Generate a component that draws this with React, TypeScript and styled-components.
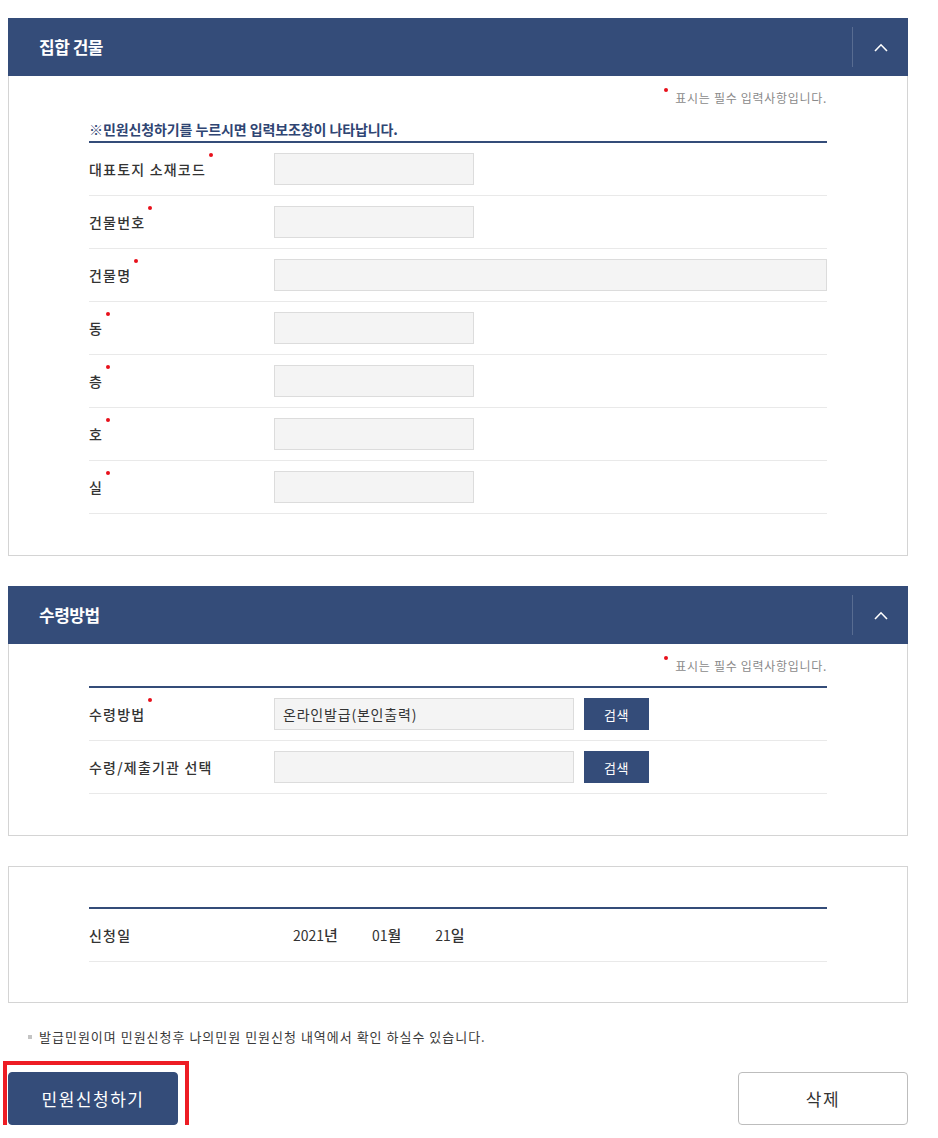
import React from "react";
import styled, { createGlobalStyle } from "styled-components";

const NAVY = "#344c79";

const GlobalStyle = createGlobalStyle`
  html, body {
    margin: 0;
    padding: 0;
    background: #ffffff;
  }
  body {
    font-family: "Noto Sans CJK KR", "Noto Sans", "Liberation Sans", sans-serif;
    color: #333333;
  }
  * { box-sizing: border-box; }
`;

const Page = styled.div`
  width: 900px;
  margin: 0 0 0 8px;
  padding-top: 18px;
`;

const Section = styled.section`
  & + & {
    margin-top: 30px;
  }
`;

const SectionHeader = styled.header`
  height: 58px;
  background: ${NAVY};
  display: flex;
  align-items: center;
  padding-left: 31px;
`;

const SectionTitle = styled.h2`
  margin: 0;
  font-size: 17px;
  font-weight: 700;
  letter-spacing: -0.5px;
  color: #ffffff;
  line-height: 24px;
`;

const ToggleButton = styled.button`
  margin-left: auto;
  width: 56px;
  height: 40px;
  border: 0;
  border-left: 1px solid rgba(255, 255, 255, 0.18);
  background: transparent;
  display: flex;
  align-items: center;
  justify-content: center;
  padding: 0;
  cursor: pointer;
`;

const Panel = styled.div<{ $open?: boolean; $top?: number; $bottom?: number }>`
  border: 1px solid #d4d4d4;
  border-top: ${(p) => (p.$open ? "1px solid #d4d4d4" : "none")};
  padding: ${(p) => p.$top ?? 12}px 80px ${(p) => p.$bottom ?? 41}px;
  background: #ffffff;
`;

const RequiredNote = styled.p`
  margin: 0;
  text-align: right;
  font-size: 12px;
  line-height: 20px;
  letter-spacing: 0.7px;
  color: #8a8a8a;
`;

const NoteDot = styled.span`
  display: inline-block;
  width: 4px;
  height: 4px;
  border-radius: 50%;
  background: #e8101b;
  vertical-align: top;
  margin-right: 7px;
`;

const Guide = styled.p`
  margin: 11px 0 0;
  padding-bottom: 2px;
  font-size: 14px;
  line-height: 20px;
  font-weight: 700;
  letter-spacing: -0.1px;
  color: #2f4573;
`;

const FormTable = styled.div<{ $gap?: number }>`
  margin-top: ${(p) => p.$gap ?? 0}px;
  border-top: 2px solid ${NAVY};
`;

const Row = styled.div`
  display: flex;
  align-items: center;
  height: 53px;
  border-bottom: 1px solid #e9e9e9;
`;

const Label = styled.div`
  width: 185px;
  flex: none;
  font-size: 14px;
  line-height: 20px;
  font-weight: 500;
  letter-spacing: 1.2px;
  color: #333333;
`;

const ReqDot = styled.span`
  display: inline-block;
  width: 4px;
  height: 4px;
  border-radius: 50%;
  background: #e8101b;
  vertical-align: top;
  margin-left: 3px;
  position: relative;
  top: -6px;
`;

const Field = styled.input<{ $w?: number }>`
  width: ${(p) => (p.$w ? `${p.$w}px` : "auto")};
  flex: ${(p) => (p.$w ? "none" : "1 1 auto")};
  min-width: 0;
  height: 32px;
  border: 1px solid #dcdcdc;
  background: #f4f4f4;
  padding: 0 8px;
  font-family: inherit;
  font-size: 14px;
  letter-spacing: 0.8px;
  color: #333333;
  outline: none;
`;

const SearchButton = styled.button`
  margin-left: 10px;
  width: 65px;
  height: 32px;
  border: 0;
  background: ${NAVY};
  color: #ffffff;
  font-family: inherit;
  font-size: 13px;
  letter-spacing: 0.5px;
  padding: 0;
  cursor: pointer;
`;

const DateValue = styled.div`
  display: flex;
  gap: 34px;
  padding-left: 19px;
  font-size: 14px;
  line-height: 20px;
  color: #333333;
`;

const DatePart = styled.span`
  white-space: nowrap;
`;

const Unit = styled.span`
  font-weight: 500;
  font-size: 15px;
`;

const Footnote = styled.p`
  margin: 24px 0 0;
  padding-left: 20px;
  font-size: 13px;
  line-height: 20px;
  letter-spacing: 1px;
  color: #3a3a3a;
  display: flex;
  align-items: center;
`;

const Bullet = styled.span`
  width: 4px;
  height: 4px;
  background: #c4c4c4;
  margin-right: 7px;
  flex: none;
`;

const ButtonBar = styled.div`
  margin-top: 25px;
  display: flex;
  justify-content: space-between;
  align-items: center;
`;

const Highlight = styled.div`
  position: relative;
  &::after {
    content: "";
    position: absolute;
    left: -5px;
    right: -11px;
    top: -11px;
    bottom: -10px;
    border: 4px solid #ed1c24;
    pointer-events: none;
  }
`;

const ActionButton = styled.button<{ $primary?: boolean }>`
  width: 170px;
  height: 53px;
  border-radius: 4px;
  border: 1px solid ${(p) => (p.$primary ? NAVY : "#bdbdbd")};
  background: ${(p) => (p.$primary ? NAVY : "#ffffff")};
  color: ${(p) => (p.$primary ? "#ffffff" : "#333333")};
  font-family: inherit;
  font-size: 17px;
  letter-spacing: 1.5px;
  padding: 0;
  cursor: pointer;
`;

const Chevron = () => (
  <svg width="14" height="9" viewBox="0 0 14 9" aria-hidden="true">
    <polyline
      points="1,8 7,1.8 13,8"
      fill="none"
      stroke="#ffffff"
      strokeWidth="1.6"
    />
  </svg>
);

type FieldDef = { label: string; width?: number };

const buildingFields: FieldDef[] = [
  { label: "대표토지 소재코드", width: 200 },
  { label: "건물번호", width: 200 },
  { label: "건물명" },
  { label: "동", width: 200 },
  { label: "층", width: 200 },
  { label: "호", width: 200 },
  { label: "실", width: 200 },
];

const Header = ({ title }: { title: string }) => (
  <SectionHeader>
    <SectionTitle>{title}</SectionTitle>
    <ToggleButton type="button" aria-label="접기">
      <Chevron />
    </ToggleButton>
  </SectionHeader>
);

const Note = () => (
  <RequiredNote>
    <NoteDot />
    표시는 필수 입력사항입니다.
  </RequiredNote>
);

export default function App() {
  return (
    <>
      <GlobalStyle />
      <Page>
        <Section>
          <Header title="집합 건물" />
          <Panel>
            <Note />
            <Guide>※민원신청하기를 누르시면 입력보조창이 나타납니다.</Guide>
            <FormTable>
              {buildingFields.map((f) => (
                <Row key={f.label}>
                  <Label>
                    {f.label}
                    <ReqDot />
                  </Label>
                  <Field $w={f.width} readOnly />
                </Row>
              ))}
            </FormTable>
          </Panel>
        </Section>

        <Section>
          <Header title="수령방법" />
          <Panel>
            <Note />
            <FormTable $gap={10}>
              <Row>
                <Label>
                  수령방법
                  <ReqDot />
                </Label>
                <Field $w={300} readOnly value="온라인발급(본인출력)" />
                <SearchButton type="button">검색</SearchButton>
              </Row>
              <Row>
                <Label>수령/제출기관 선택</Label>
                <Field $w={300} readOnly />
                <SearchButton type="button">검색</SearchButton>
              </Row>
            </FormTable>
          </Panel>
        </Section>

        <Section>
          <Panel $open $top={40} $bottom={40}>
            <FormTable>
              <Row>
                <Label>신청일</Label>
                <DateValue>
                  <DatePart>
                    2021<Unit>년</Unit>
                  </DatePart>
                  <DatePart>
                    01<Unit>월</Unit>
                  </DatePart>
                  <DatePart>
                    21<Unit>일</Unit>
                  </DatePart>
                </DateValue>
              </Row>
            </FormTable>
          </Panel>
        </Section>

        <Footnote>
          <Bullet />
          발급민원이며 민원신청후 나의민원 민원신청 내역에서 확인 하실수 있습니다.
        </Footnote>

        <ButtonBar>
          <Highlight>
            <ActionButton type="button" $primary>
              민원신청하기
            </ActionButton>
          </Highlight>
          <ActionButton type="button">삭제</ActionButton>
        </ButtonBar>
      </Page>
    </>
  );
}
